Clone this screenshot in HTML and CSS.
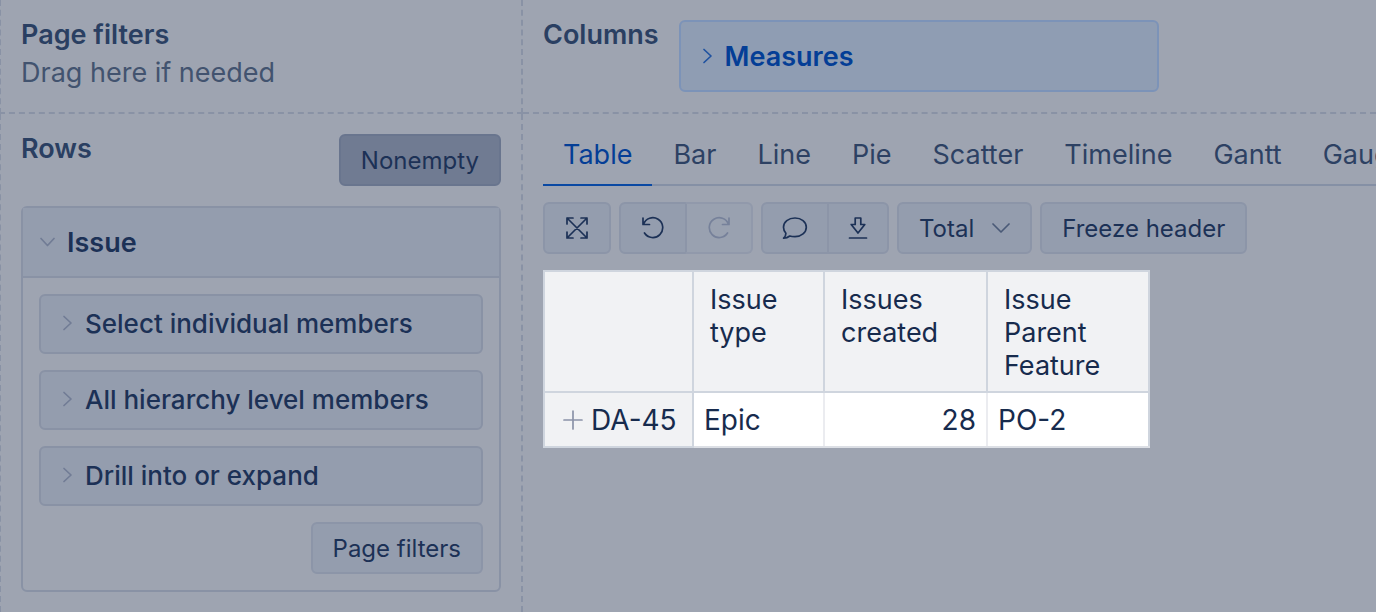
FILE: index.html
```html
<!DOCTYPE html>
<html lang="en">
<head>
    <meta charset="utf-8">
    <title>Report</title>
    <link rel="stylesheet" href="styles.css">
</head>
<body>
    <div class="report">
        <section class="page-filters">
            <h2>Page filters</h2>
            <p>Drag here if needed</p>
        </section>

        <section class="columns">
            <h2>Columns</h2>
            <button class="measures">
                <svg class="chevron" width="12" height="16" viewBox="0 0 12 16"><path d="M3 1.500l7 6.500-7 6.500"/></svg>
                Measures
            </button>
        </section>

        <section class="rows">
            <div class="rows-header">
                <h2>Rows</h2>
                <button class="btn pressed">Nonempty</button>
            </div>
            <div class="dimension">
                <button class="dimension-title">
                    <svg class="chevron" width="16" height="12" viewBox="0 0 16 12"><path d="M2 2.500l6.500 7 6.500-7"/></svg>
                    Issue
                </button>
                <div class="dimension-body">
                    <button class="level">
                        <svg class="chevron" width="12" height="16" viewBox="0 0 12 16"><path d="M3 1.500l7 6.500-7 6.500"/></svg>
                        Select individual members
                    </button>
                    <button class="level">
                        <svg class="chevron" width="12" height="16" viewBox="0 0 12 16"><path d="M3 1.500l7 6.500-7 6.500"/></svg>
                        All hierarchy level members
                    </button>
                    <button class="level">
                        <svg class="chevron" width="12" height="16" viewBox="0 0 12 16"><path d="M3 1.500l7 6.500-7 6.500"/></svg>
                        Drill into or expand
                    </button>
                    <button class="btn to-filters">Page filters</button>
                </div>
            </div>
        </section>

        <main class="results">
            <nav class="tabs">
                <a href="#table" class="active">Table</a>
                <a href="#bar">Bar</a>
                <a href="#line">Line</a>
                <a href="#pie">Pie</a>
                <a href="#scatter">Scatter</a>
                <a href="#timeline">Timeline</a>
                <a href="#gantt">Gantt</a>
                <a href="#gauge">Gauge</a>
            </nav>

            <div class="toolbar">
                <button class="btn icon" aria-label="Full screen">
                    <svg width="24" height="24" viewBox="0 0 24 24"><path d="M2 2l20 20M22 2L2 22M2 8V2h6M16 2h6v6M22 16v6h-6M8 22H2v-6"/></svg>
                </button>
                <div class="group">
                    <button class="btn icon" aria-label="Undo">
                        <svg width="24" height="24" viewBox="0 0 24 24"><path d="M2 2v6.500h6.500M2.500 8.300A9.900 9.900 0 1 1 3.500 17"/></svg>
                    </button>
                    <button class="btn icon" aria-label="Redo" disabled>
                        <svg width="24" height="24" viewBox="0 0 24 24"><path d="M22 2v6.500h-6.500M21.500 8.300A9.900 9.900 0 1 0 20.500 17"/></svg>
                    </button>
                </div>
                <div class="group">
                    <button class="btn icon" aria-label="Comments">
                        <svg width="26" height="24" viewBox="0 0 26 24"><path d="M13 2C6.500 2 1.500 6 1.500 11.200c0 2.300.9 4.300 2.400 6C3.900 19.300 3 21 1.600 22.200c2.600 0 4.600-.9 6.200-2.200 1.600.5 3.400.6 5.200.6 6.300 0 11.300-4.200 11.300-9.400S19.300 2 13 2z"/></svg>
                    </button>
                    <button class="btn icon narrow" aria-label="Export">
                        <svg width="20" height="24" viewBox="0 0 20 24"><path d="M7.200 2h5.600v6.500h4L10 17 3.200 8.500h4zM1.500 22h17"/></svg>
                    </button>
                </div>
                <button class="btn">
                    Total
                    <svg class="caret" width="18" height="12" viewBox="0 0 18 12"><path d="M1 2l8 8 8-8"/></svg>
                </button>
                <button class="btn">Freeze header</button>
            </div>

            <table>
                <colgroup>
                    <col class="col-member"><col class="col-type"><col class="col-created"><col class="col-feature">
                </colgroup>
                <thead>
                    <tr>
                        <td></td>
                        <th scope="col">Issue type</th>
                        <th scope="col">Issues created</th>
                        <th scope="col">Issue Parent Feature</th>
                    </tr>
                </thead>
                <tbody>
                    <tr>
                        <th scope="row"><svg class="plus" width="20" height="20" viewBox="0 0 20 20"><path d="M1 10h18M10 1v18"/></svg>DA-45</th>
                        <td>Epic</td>
                        <td class="number">28</td>
                        <td>PO-2</td>
                    </tr>
                </tbody>
            </table>
        </main>
    </div>
</body>
</html>
```
FILE: styles.css
```css
* {
    box-sizing: border-box;
}

body {
    margin: 0;
    background: #9ea4b1;
    color: #1c3156;
    font-family: Inter, "Liberation Sans", sans-serif;
    font-size: 27px;
    line-height: 34px;
}

h2, p {
    margin: 0;
    font-size: 27px;
}

h2 {
    font-weight: 600;
    color: #2a3f62;
}

button {
    font-family: inherit;
    color: inherit;
    cursor: pointer;
}

svg {
    flex: none;
    fill: none;
    stroke: currentColor;
    stroke-width: 1.7;
    stroke-linecap: round;
    stroke-linejoin: round;
}

.report {
    display: grid;
    grid-template-columns: 524px minmax(0, 1fr);
    min-height: 100vh;
    margin-left: -1px;
    overflow: hidden;
}

.page-filters,
.rows {
    border-left: 2px dashed #8992a5;
    border-right: 2px dashed #8992a5;
}

.page-filters,
.columns {
    border-bottom: 2px dashed #8992a5;
}

.page-filters {
    padding: 18px 20px 0;
}

.page-filters p {
    margin-top: 4px;
    color: #42536f;
}

.columns {
    display: flex;
    gap: 20px;
    padding: 20px;
}

.columns h2,
.rows h2 {
    line-height: 30px;
}

.measures,
.dimension-title,
.level {
    display: flex;
    align-items: center;
    gap: 12px;
}

.measures {
    width: 480px;
    height: 72px;
    padding: 0 20px;
    background: #8f9db3;
    border: 2px solid #7c93b8;
    border-radius: 6px;
    color: #043e96;
    font-size: 27px;
    font-weight: 600;
}

.chevron {
    color: #717c95;
}

.measures .chevron {
    color: #1f52a0;
}

.rows {
    padding: 20px;
}

.rows-header {
    display: flex;
    justify-content: space-between;
    margin-bottom: 20px;
}

.btn {
    display: flex;
    align-items: center;
    height: 52px;
    padding: 0 20px;
    background: #949dae;
    border: 2px solid #8c95a8;
    border-radius: 6px;
    font-size: 24px;
}

.btn.pressed {
    background: #707b92;
    border-color: #69758e;
}

.dimension {
    border: 2px solid #8992a5;
    border-radius: 6px;
}

.dimension-title {
    width: 100%;
    height: 70px;
    padding: 0 16px;
    background: #949dae;
    border: 0;
    border-bottom: 2px solid #8992a5;
    font-size: 27px;
    font-weight: 600;
}

.dimension-body {
    display: flex;
    flex-direction: column;
    gap: 16px;
    padding: 16px;
}

.level {
    height: 60px;
    padding: 0 20px 2px;
    background: #949dae;
    border: 2px solid #8992a5;
    border-radius: 6px;
    font-size: 26px;
    font-weight: 500;
}

.to-filters {
    align-self: flex-end;
}

.results {
    padding: 8px 0 20px 20px;
}

.tabs {
    display: flex;
    gap: 1px;
    border-bottom: 2px solid #8590a5;
}

.tabs a {
    flex: none;
    margin-bottom: -2px;
    padding: 16px 20px 12px;
    line-height: 34px;
    color: #2d4163;
    text-decoration: none;
}

.tabs .active {
    color: #043e96;
    border-bottom: 2px solid #0a49a3;
}

.toolbar {
    display: flex;
    gap: 8px;
    margin: 16px 0;
}

.group {
    display: flex;
}

.group .btn:first-child {
    border-radius: 6px 0 0 6px;
}

.group .btn:last-child {
    margin-left: -2px;
    border-radius: 0 6px 6px 0;
}

.btn.icon {
    justify-content: center;
    width: 68px;
    padding: 0;
}

.btn.narrow {
    width: 62px;
}

.btn:disabled {
    background: #99a1b0;
    border-color: #9199ab;
    border-left-color: #8c95a8;
    color: #76819a;
}

.caret {
    margin-left: 18px;
    color: #4a5a77;
}

table {
    width: 607px;
    table-layout: fixed;
    border-collapse: collapse;
    background: #fff;
    color: #172b4d;
    line-height: 33px;
}

.col-member { width: 149px; }
.col-type { width: 131px; }
.col-created { width: 163px; }
.col-feature { width: 162px; }

th {
    font-weight: 400;
    text-align: left;
}

th,
thead td {
    background: #f1f2f4;
    border: 2px solid #cfd5de;
}

thead th {
    padding: 11px 16px 9px;
    vertical-align: top;
}

tbody td {
    padding: 11px 10px 9px;
    border: 2px solid #ebecf0;
    border-top-color: #cfd5de;
    border-bottom-color: #dcdfe5;
}

tbody td:last-child {
    border-right-color: #cfd5de;
}

tbody th {
    padding: 11px 16px 9px 18px;
    white-space: nowrap;
}

tbody th,
tbody td {
    font-size: 28px;
}

.number {
    text-align: right;
}

.plus {
    margin-right: 8px;
    color: #8b93a8;
}
```
